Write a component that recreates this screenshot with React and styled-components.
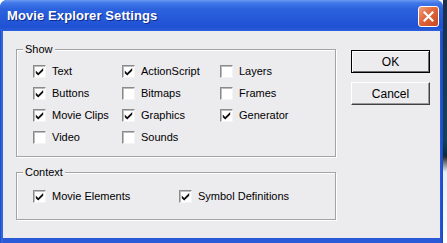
import styled, { createGlobalStyle } from 'styled-components'

const GlobalStyle = createGlobalStyle`
    html, body {
        margin: 0;
        padding: 0;
        background: #ffffff;
    }
    body {
        font-family: "Liberation Sans", Arial, sans-serif;
        font-size: 11px;
        color: #000;
    }
`

const Screen = styled.div`
    display: flex;
    width: 447px;
    height: 243px;
    overflow: hidden;
`

const Window = styled.div`
    width: 443px;
    height: 243px;
    display: flex;
    flex-direction: column;
    box-sizing: border-box;
    border-radius: 7px 7px 0 0;
    overflow: hidden;
    background: linear-gradient(90deg, #1846c8 0, #3a6ee0 2px, #2a5ad8 3px, #2a5ad8 440px, #1846c8 443px);
`

const TitleBar = styled.div`
    height: 31px;
    flex: none;
    display: flex;
    align-items: center;
    justify-content: space-between;
    padding: 0 4px 0 7px;
    background: linear-gradient(#6b9af2 0, #4178e8 3px, #2d62de 9px, #2458d8 20px, #1f52d2 27px, #2b5fdb 31px);
`

const Title = styled.div`
    color: #fff;
    font-family: "Liberation Sans", Arial, sans-serif;
    font-weight: bold;
    font-size: 13px;
    text-shadow: 1px 1px 0 #0f2a8a;
    letter-spacing: 0.1px;
`

const CloseButton = styled.div`
    width: 19px;
    height: 19px;
    border: 1px solid #fff;
    border-radius: 3px;
    background: linear-gradient(135deg, #f0a07c 0%, #e0663c 45%, #c94620 100%);
    display: flex;
    align-items: center;
    justify-content: center;
    margin-top: 1px;
`

const Body = styled.div`
    flex: 1;
    margin: 0 3px 5px 3px;
    background: #ecebee;
    display: flex;
    padding: 18px 0 0 13px;
    gap: 15px;
`

const Column = styled.div`
    display: flex;
    flex-direction: column;
    gap: ${p => p.$gap || 0}px;
    padding-top: ${p => p.$top || 0}px;
`

const Group = styled.div`
    position: relative;
    width: 320px;
    box-sizing: border-box;
    border: 1px solid #a3a3a3;
    box-shadow: 1px 1px 0 #fff, inset 1px 1px 0 #fff;
    padding: ${p => p.$pad};
    display: grid;
    grid-template-columns: ${p => p.$cols};
`

const Caption = styled.span`
    position: absolute;
    top: -7px;
    left: 6px;
    padding: 0 2px;
    background: #ecebee;
    line-height: 13px;
`

const Item = styled.label`
    height: 22px;
    display: flex;
    align-items: center;
    gap: 6px;
    white-space: nowrap;
`

const Box = styled.span`
    width: 11px;
    height: 11px;
    flex: none;
    background: #fff;
    border: 1px solid;
    border-color: #8a8a8a #f4f4f4 #f4f4f4 #8a8a8a;
    box-shadow: inset 1px 1px 0 #bdbdbd;
    display: flex;
    align-items: center;
    justify-content: center;
`

const Button = styled.div`
    width: 79px;
    height: 23px;
    box-sizing: border-box;
    display: flex;
    align-items: center;
    justify-content: center;
    background: #ecebee;
    border: 1px solid;
    border-color: ${p => p.$default ? '#000' : '#fff #404040 #404040 #fff'};
    box-shadow: ${p => p.$default
        ? 'inset 1px 1px 0 #fff, inset -1px -1px 0 #6e6e6e'
        : 'inset -1px -1px 0 #9a9a9a'};
    font-size: 12px;
`

const Desktop = styled.div`
    flex: 1;
    background: linear-gradient(#1d2f4a 0, #14415a 140px, #0d2c3c 155px, #2b2b2b 157px, #e9eef3 172px, #ffffff 243px);
`

function CheckMark() {
    return (
        <svg width="9" height="9" viewBox="0 0 9 9">
            <path d="M0.8 3.6 L3.2 6 L8.2 1 L8.2 3.8 L3.2 8.6 L0.8 6.2 Z" fill="#111" />
        </svg>
    )
}

function Check({ label, checked }) {
    return (
        <Item>
            <Box>{checked && <CheckMark />}</Box>
            {label}
        </Item>
    )
}

const showItems = [
    ['Text', true], ['ActionScript', true], ['Layers', false],
    ['Buttons', true], ['Bitmaps', false], ['Frames', false],
    ['Movie Clips', true], ['Graphics', true], ['Generator', true],
    ['Video', false], ['Sounds', false], null,
]

export default function App() {
    return (
        <Screen>
            <GlobalStyle />
            <Window>
                <TitleBar>
                    <Title>Movie Explorer Settings</Title>
                    <CloseButton>
                        <svg width="11" height="11" viewBox="0 0 11 11">
                            <path d="M1.5 1.5 L9.5 9.5 M9.5 1.5 L1.5 9.5" stroke="#fff" strokeWidth="2.2" strokeLinecap="square" />
                        </svg>
                    </CloseButton>
                </TitleBar>
                <Body>
                    <Column $gap={15}>
                        <Group $pad="10px 0 8px 16px" $cols="89px 98px 1fr">
                            <Caption>Show</Caption>
                            {showItems.map((it, i) =>
                                it ? <Check key={i} label={it[0]} checked={it[1]} /> : <span key={i} />
                            )}
                        </Group>
                        <Group $pad="12px 0 12px 16px" $cols="146px 1fr">
                            <Caption>Context</Caption>
                            <Check label="Movie Elements" checked />
                            <Check label="Symbol Definitions" checked />
                        </Group>
                    </Column>
                    <Column $gap={9} $top={1}>
                        <Button $default>OK</Button>
                        <Button>Cancel</Button>
                    </Column>
                </Body>
            </Window>
            <Desktop />
        </Screen>
    )
}
